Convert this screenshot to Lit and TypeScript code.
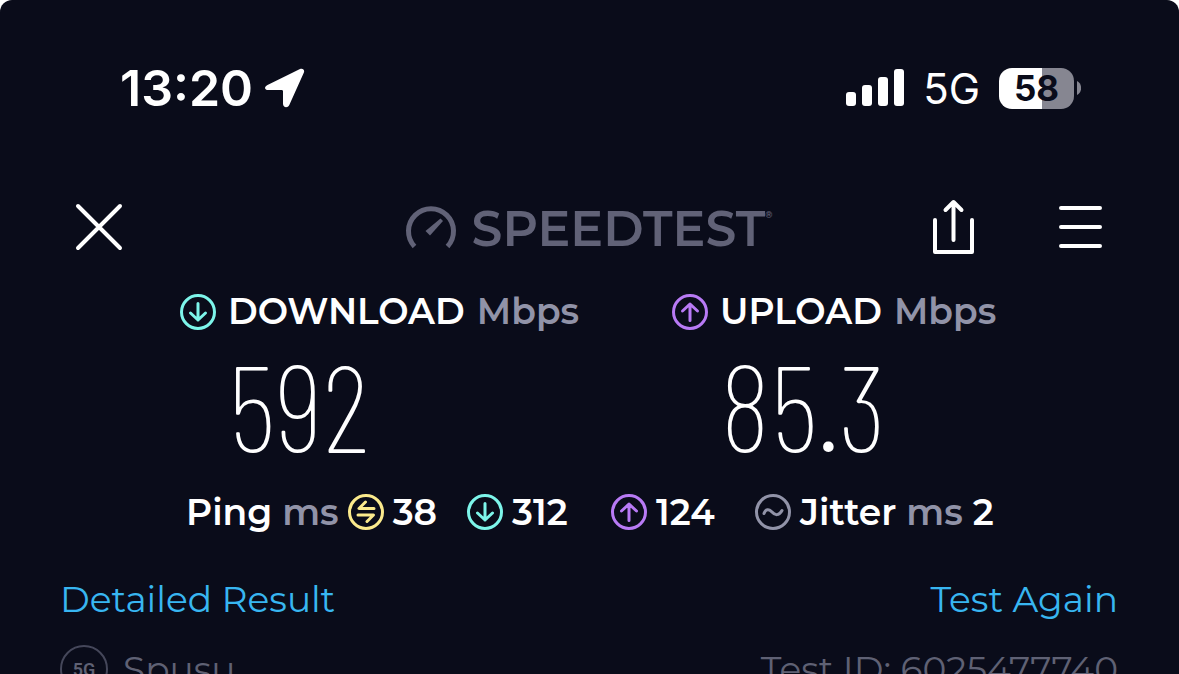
import { LitElement, html, css, svg } from "lit";
import { customElement, property } from "lit/decorators.js";

const glyphs: Record<string, unknown> = {
  down: svg`<path d="M18 9.500V26M10.500 19l7.500 7 7.500-7" />`,
  up: svg`<path d="M18 26.500V10M10.500 17l7.500-7 7.500 7" />`,
  ping: svg`<path d="M17.500 8L11 14.500H26M10 21H25.500L19 27.500" />`,
  jitter: svg`<path d="M9 19.500c1.500-4.500 5-5 8-1.500s7 4 10-1.500" />`,
};

@customElement("metric-icon")
export class MetricIcon extends LitElement {
  static styles = css`
    :host {
      display: block;
      flex: none;
      width: 36px;
      height: 36px;
    }
    .icon {
      display: block;
      fill: none;
      stroke-width: 3;
      stroke-linecap: round;
      stroke-linejoin: round;
    }
    .down { stroke: #7df5ea; }
    .up { stroke: #b87af5; }
    .ping { stroke: #fbea8c; }
    .jitter { stroke: #9193a8; }
  `;

  @property() kind = "down";

  render() {
    return html`<svg class="icon ${this.kind}" width="36" height="36" viewBox="0 0 36 36" aria-hidden="true">
      <circle cx="18" cy="18" r="16.500" />
      ${glyphs[this.kind]}
    </svg>`;
  }
}

@customElement("app-root")
export class AppRoot extends LitElement {
  static styles = css`
    :host {
      display: block;
      height: 100vh;
      overflow: hidden;
      background: #fff;
      font-family: Montserrat, Inter, "Open Sans", sans-serif;
      color: #fff;
    }
    .screen {
      box-sizing: border-box;
      min-height: 100%;
      padding-top: 56px;
      background: #0a0c1a;
      border-radius: 12px 12px 0 0;
    }
    .status {
      display: flex;
      justify-content: space-between;
      align-items: center;
      height: 64px;
      padding: 0 98px 0 120px;
      font-family: Inter, sans-serif;
    }
    .clock {
      display: flex;
      align-items: center;
      gap: 12px;
      font-size: 50px;
      font-weight: 600;
    }
    .signals {
      display: flex;
      align-items: center;
      gap: 19px;
      font-size: 42px;
    }
    .battery {
      display: flex;
      align-items: center;
      gap: 3px;
    }
    .level {
      width: 75px;
      height: 41px;
      border-radius: 13px;
      background: linear-gradient(to right, #fff 57%, #868691 57%);
      color: #0a0c1a;
      font-size: 35px;
      font-weight: 700;
      line-height: 41px;
      text-align: center;
    }
    .header {
      display: grid;
      grid-template-columns: 1fr auto 1fr;
      align-items: center;
      height: 60px;
      margin-top: 77px;
      padding: 0 75px 0 73px;
    }
    .tool {
      display: block;
      padding: 0;
      border: 0;
      background: none;
      color: inherit;
      cursor: pointer;
    }
    .stroke {
      display: block;
      fill: none;
      stroke: currentColor;
      stroke-width: 4;
      stroke-linecap: round;
      stroke-linejoin: round;
    }
    .tools {
      display: flex;
      justify-content: flex-end;
      align-items: center;
      gap: 79px;
    }
    .brand {
      display: flex;
      align-items: center;
      gap: 15px;
      color: #616277;
      font-size: 49px;
      font-weight: 600;
      line-height: 56px;
    }
    .name {
      display: flex;
      padding-top: 4px;
    }
    .mark {
      font-size: 9px;
      line-height: 28px;
    }
    .speeds {
      display: grid;
      grid-template-columns: 3fr 2fr;
      margin-top: 33px;
      padding: 0 179px 0 180px;
    }
    .label {
      display: flex;
      align-items: center;
      gap: 12px;
      height: 43px;
      margin: 0;
      font-size: 36px;
      font-weight: 600;
      line-height: 43px;
      white-space: nowrap;
    }
    .unit {
      color: #9193a8;
    }
    .value {
      margin: 0 0 0 48px;
      padding-bottom: 13px;
      font-family: "Barlow Condensed", "Roboto Condensed", Roboto, sans-serif;
      font-size: 122px;
      font-weight: 200;
      line-height: 142px;
    }
    .latency {
      display: grid;
      grid-template-columns: 281fr 144fr 144fr 240fr;
      margin: 2px 0 0;
      padding: 0 184px 0 186px;
      font-size: 36px;
      font-weight: 600;
      line-height: 44px;
      white-space: nowrap;
    }
    .reading {
      display: flex;
      align-items: center;
      gap: 9px;
    }
    .row {
      display: flex;
      justify-content: space-between;
      align-items: center;
      padding: 0 61px 0 60px;
      font-size: 36px;
      font-weight: 400;
      line-height: 48px;
    }
    .links {
      margin-top: 41px;
    }
    .link {
      color: #38b6f1;
      text-decoration: none;
    }
    .details {
      margin-top: 22px;
      color: #5f6174;
    }
    .carrier {
      display: flex;
      align-items: center;
      gap: 15px;
    }
    .network {
      box-sizing: border-box;
      width: 48px;
      height: 48px;
      border: 2px solid #45475a;
      border-radius: 50%;
      font-family: Roboto, sans-serif;
      font-size: 18px;
      font-weight: 600;
      line-height: 46px;
      text-align: center;
    }
  `;

  render() {
    return html`
      <main class="screen">
        <div class="status">
          <div class="clock">
            <span>13:20</span>
            <svg width="40" height="40" viewBox="0 0 40 40" aria-hidden="true">
              <path d="M2.500 17L35 1c2.800-1.300 5 1 3.800 3.800L24.300 37c-1.800 3.600-6.300 2.600-6.300-1.300V23.500c0-1-.5-1.500-1.500-1.500H3.500C-.6 22-1.200 18.900 2.500 17Z" fill="#fff" />
            </svg>
          </div>
          <div class="signals">
            <svg width="58" height="38" viewBox="0 0 58 38" fill="#fff" aria-hidden="true">
              <rect y="23" width="10" height="14" rx="3" />
              <rect x="16" y="16" width="10" height="21" rx="3" />
              <rect x="32" y="8" width="10" height="29" rx="3" />
              <rect x="48" width="10" height="37" rx="3" />
            </svg>
            <span>5G</span>
            <div class="battery">
              <span class="level">58</span>
              <svg width="4" height="14" viewBox="0 0 4 14" aria-hidden="true">
                <path d="M0 0C5.500 2.500 5.500 11.500 0 14Z" fill="#868691" />
              </svg>
            </div>
          </div>
        </div>

        <header class="header">
          <button class="tool" aria-label="Close">
            <svg class="stroke" width="50" height="50" viewBox="0 0 50 50"><path d="M5 4l42 42M47 4L5 46" /></svg>
          </button>
          <div class="brand">
            <svg width="52" height="44" viewBox="0 0 52 44" aria-hidden="true">
              <path d="M9.500 41.500A22.500 22.500 0 1 1 42.500 41.500" fill="none" stroke="currentColor" stroke-width="5" />
              <path d="M20.500 26L35.500 13.500l2.500 2.500L25 30.500Z" fill="currentColor" />
            </svg>
            <span class="name">SPEEDTEST<span class="mark">®</span></span>
          </div>
          <div class="tools">
            <button class="tool" aria-label="Share">
              <svg class="stroke" width="46" height="58" viewBox="0 0 46 58"><path d="M4 22v32h37V22M22.500 42V4M14.500 12l8-8 8 8" /></svg>
            </button>
            <button class="tool" aria-label="Menu">
              <svg class="stroke" width="48" height="48" viewBox="0 0 48 48"><path d="M5 5h39M5 24h39M5 43h39" /></svg>
            </button>
          </div>
        </header>

        <section class="speeds">
          <div>
            <h2 class="label"><metric-icon kind="down"></metric-icon><span>DOWNLOAD</span><span class="unit">Mbps</span></h2>
            <p class="value">592</p>
          </div>
          <div>
            <h2 class="label"><metric-icon kind="up"></metric-icon><span>UPLOAD</span><span class="unit">Mbps</span></h2>
            <p class="value">85.3</p>
          </div>
        </section>

        <section class="latency">
          <div class="reading"><span>Ping <span class="unit">ms</span></span><metric-icon kind="ping"></metric-icon><span>38</span></div>
          <div class="reading"><metric-icon kind="down"></metric-icon><span>312</span></div>
          <div class="reading"><metric-icon kind="up"></metric-icon><span>124</span></div>
          <div class="reading"><metric-icon kind="jitter"></metric-icon><span>Jitter <span class="unit">ms</span> 2</span></div>
        </section>

        <nav class="row links">
          <a class="link" href="#details">Detailed Result</a>
          <a class="link" href="#test">Test Again</a>
        </nav>
        <div class="row details">
          <div class="carrier"><span class="network">5G</span><span>Spusu</span></div>
          <span>Test ID: 6025477740</span>
        </div>
      </main>
    `;
  }
}
